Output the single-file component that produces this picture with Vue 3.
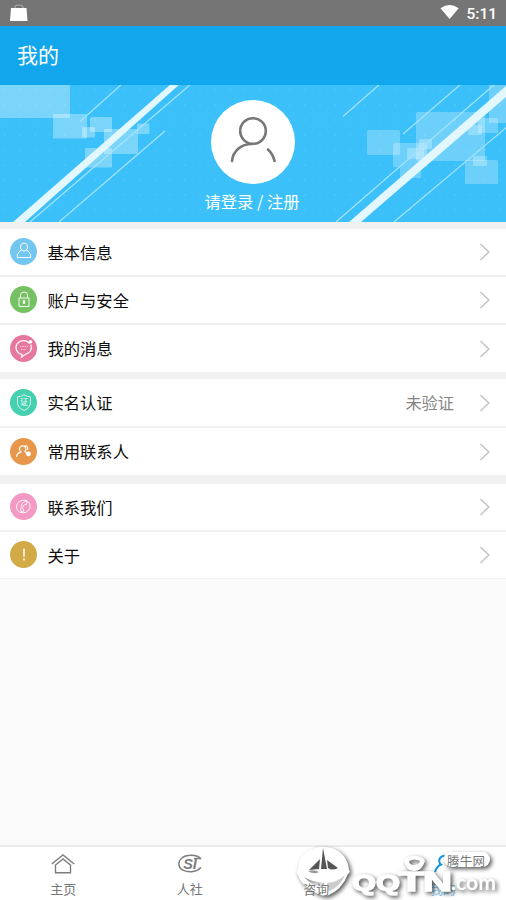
<script setup>
const groups = [
  [
    { icon: 'user', color: '#72c6ef', label: '基本信息' },
    { icon: 'lock', color: '#76c163', label: '账户与安全' },
    { icon: 'chat', color: '#e6779e', label: '我的消息' },
  ],
  [
    { icon: 'shield', color: '#45d0b0', label: '实名认证', value: '未验证' },
    { icon: 'contacts', color: '#e8964a', label: '常用联系人' },
  ],
  [
    { icon: 'phone', color: '#f29ac4', label: '联系我们' },
    { icon: 'about', color: '#d2ab46', label: '关于' },
  ],
]
</script>

<template>
  <div class="screen">
    <div class="status">
      <svg class="bag" width="20" height="18" viewBox="0 0 20 18">
        <path d="M6 5V3.500Q6 1 10 1T14 3.500V5" fill="none" stroke="#aaa" stroke-width="1.200" />
        <path d="M2 4H17.500L18.500 17H1Z" fill="#fff" />
      </svg>
      <div class="right">
        <svg width="20" height="16" viewBox="0 0 20 16"><path d="M.5 4.200Q9.500-2.200 18.700 4.200L9.600 15Z" fill="#fff" /></svg>
        <span>5:11</span>
      </div>
    </div>
    <header>我的</header>
    <section class="banner">
      <svg class="art" width="506" height="137" viewBox="0 0 506 137">
        <defs>
          <pattern id="dots" width="15" height="15" patternUnits="userSpaceOnUse"><circle cx="5" cy="5" r=".8" fill="#5ac9fb" /></pattern>
        </defs>
        <rect width="506" height="137" fill="url(#dots)" />
        <g fill="#fff" fill-opacity=".33">
          <rect x="-2" y="-2" width="72" height="35" rx="1" />
          <rect x="53" y="29" width="34" height="24.500" rx="1" />
          <rect x="90" y="32" width="22" height="15" rx="1" />
          <rect x="82" y="42" width="13" height="10.500" rx="1" />
          <rect x="104" y="44" width="34" height="25" rx="1" />
          <rect x="137" y="38.500" width="12.500" height="10.500" rx="1" />
          <rect x="85" y="63" width="27" height="19.500" rx="1" />
        </g>
        <g fill="#fff" fill-opacity=".26">
          <rect x="367" y="45" width="33" height="25" rx="1.500" />
          <rect x="393" y="58" width="34" height="24" rx="1.500" />
          <rect x="407" y="63" width="17" height="11" rx="1" />
          <rect x="419" y="54" width="13" height="10" rx="1" />
          <rect x="400" y="82" width="21" height="11" rx="1" />
          <rect x="416" y="27" width="69" height="49" rx="1.500" />
          <rect x="468" y="40" width="14" height="10" rx="1" />
          <rect x="478" y="33" width="20" height="15" rx="1" />
          <rect x="489" y="-2" width="20" height="40" rx="1" />
          <rect x="465" y="75" width="33" height="24" rx="1.500" />
          <rect x="473" y="71" width="14" height="10" rx="1" />
        </g>
        <g fill="#e2f7fe">
          <path d="M171-1H180L25 137H13Z" />
          <path d="M506 1V12L361 137H349Z" />
        </g>
        <g fill="none" stroke="#a5e4fc" stroke-width="1.200">
          <path d="M122-1L80 36.500M191-1L30 137M165 46L59 137" />
          <path d="M380-1L343 31.500M461-1L403 49M495-1L336 137M507 42L394 137" />
        </g>
      </svg>
      <div class="avatar">
        <svg width="84" height="84" viewBox="0 0 84 84" fill="none" stroke="#777" stroke-width="2.600" stroke-linecap="round">
          <circle cx="42" cy="31" r="12.800" />
          <path d="M21 61C22 51 30 44 41 44M57 49.500Q62 54 63.500 61" />
        </svg>
      </div>
      <div class="login">请登录 / 注册</div>
    </section>
    <main>
      <div v-for="(group, i) in groups" :key="i" class="group" :class="'group-' + i">
        <div v-for="item in group" :key="item.label" class="row">
          <svg class="icon" width="27" height="27" viewBox="0 0 27 27" fill="none" stroke="#fff" stroke-opacity=".9" stroke-width="1">
            <circle cx="13.500" cy="13.500" r="13.500" :fill="item.color" stroke="none" />
            <g v-if="item.icon === 'user'">
              <ellipse cx="14" cy="9" rx="3.600" ry="4" />
              <path d="M11.500 12C9 13.500 7 15.500 7.200 19.500H20.800C21 15.500 19 13.500 16.500 12" />
            </g>
            <g v-else-if="item.icon === 'lock'">
              <path d="M9 12H19V20.500H9ZM10.500 12V9Q10.500 6 14 6T17.500 9V12" />
              <path d="M14 14V18M12.700 15.500H15.300" stroke-width="1.800" />
            </g>
            <g v-else-if="item.icon === 'chat'">
              <path d="M19.800 8.500A7.600 7 0 1 0 12 19.400L11.500 22L15.500 19.300A7.600 7 0 0 0 20.700 9.500" stroke-width="1.300" />
              <circle cx="20.500" cy="6.700" r="1.800" fill="#fff" stroke="none" />
              <path d="M10 11.500H18M11 14.500H16" stroke-opacity=".55" stroke-dasharray="1.600 .6" />
            </g>
            <g v-else-if="item.icon === 'shield'">
              <path d="M14 5.500Q17 8 20.500 7.800V13Q20.500 19 14 21.500Q7.500 19 7.500 13V7.800Q11 8 14 5.500Z" stroke-opacity=".75" />
              <text x="14" y="16" class="seal">证</text>
            </g>
            <g v-else-if="item.icon === 'contacts'" stroke-width="1.300">
              <path d="M11.500 14A3.200 3.200 0 1 1 15 13.200L17.500 16.500M6.500 19C7 16 9 14.200 11.500 14M14.500 8Q18.500 7.500 17.500 12" />
              <circle cx="18.500" cy="16" r="2.400" fill="#fff" stroke="none" />
            </g>
            <g v-else-if="item.icon === 'phone'">
              <path d="M9.500 19C4.500 16 6 8.500 12.500 7.300C17.500 6.500 20.500 10 20 14C19.500 18.500 14.500 21 9.500 19" />
              <path d="M15.800 8.200C12 9.500 10.300 13 11 18.500L13.200 18.800L13.800 16.800L12.700 16C12.700 13.500 13.500 12 15 11.300L16.500 11.500L17.300 9Z" stroke-width=".9" />
            </g>
            <g v-else>
              <path d="M14 7.500V15.800M14 17.500V19.500" stroke-width="1.700" />
            </g>
          </svg>
          <span class="label">{{ item.label }}</span>
          <span v-if="item.value" class="value">{{ item.value }}</span>
          <svg class="chevron" width="12" height="20" viewBox="0 0 12 20"><path d="M1.500 2L9.800 10L1.500 18" fill="none" stroke="#c3c3c3" stroke-width="1.500" /></svg>
        </div>
      </div>
    </main>
    <nav>
      <div class="tab">
        <svg width="26" height="22" viewBox="0 0 26 22" fill="none" stroke="#7d7d7d" stroke-width="1.400">
          <path d="M1.800 11L13 2L24.200 11M5.500 19.800V12L13 6L20.500 12V19.800Z" />
        </svg>
        <span>主页</span>
      </div>
      <div class="tab">
        <svg width="26" height="22" viewBox="0 0 26 22">
          <path d="M24 6C20 1 9 1.500 5 5C0 9 1.500 15 6 17.200C12 20 20 19 24 14.500" fill="none" stroke="#7d7d7d" stroke-width="1.500" />
          <text x="13" y="15.500" class="si">SI</text>
          <path d="M17 5.500H24" stroke="#7d7d7d" stroke-width="1.400" />
        </svg>
        <span>人社</span>
      </div>
      <div class="tab front">
        <svg width="26" height="22" viewBox="0 0 26 22" />
        <span>咨询</span>
      </div>
      <div class="tab active">
        <svg width="26" height="22" viewBox="0 0 26 22" fill="none" stroke="#1296db" stroke-width="2">
          <path d="M14.500 2.500Q9 4 9.200 8Q9.500 10.500 11 11.500Q6.500 13.500 5 19" />
        </svg>
        <span>我的</span>
      </div>
    </nav>
    <svg class="mark" width="214" height="56" viewBox="0 0 214 56">
      <defs>
        <linearGradient id="bowl" x1="0" y1="0" x2="1" y2="1">
          <stop offset="0" stop-color="#777" />
          <stop offset="1" stop-color="#fff" />
        </linearGradient>
      </defs>
      <g class="raised" fill="#fff">
        <path d="M6 26C6 13 15 3 31 3S56 13 57 26Q59 28 56 30Q50 46 35 52Q26 52 15 43Q8 38 6 31Q3 28 6 26Z" />
        <path fill-rule="evenodd" d="M112 17Q114 27 122 27T133 17L131 14Q122 9 114 14ZM117 17Q122 14 128 17Q127 21 122 21T117 17Z" />
        <rect x="152" y="8" width="46" height="15" rx="7.500" />
        <g class="brand">
          <text x="60" y="46" textLength="24" lengthAdjust="spacingAndGlyphs" class="q">Q</text>
          <text x="84" y="46" textLength="24" lengthAdjust="spacingAndGlyphs" class="q">Q</text>
          <text x="107" y="47" textLength="25" lengthAdjust="spacingAndGlyphs">T</text>
          <text x="131" y="47" textLength="29" lengthAdjust="spacingAndGlyphs">N</text>
        </g>
        <text x="159" y="46" textLength="45" lengthAdjust="spacingAndGlyphs" class="com">.com</text>
      </g>
      <path d="M17 26L28 15L27 25ZM29 25L31 4L35 25ZM36 24L35 16L46 24Q40 27 36 24Z" fill="#555" />
      <path d="M16 27Q22 25 27 28Q22 31 16 27Z" fill="#999" />
      <path d="M12 33Q20 38 29 38L31 44Q20 42 12 33Z" fill="url(#bowl)" />
      <path d="M35 39Q46 38 53 31Q48 43 37 47Z" fill="#ccc" />
      <text x="155" y="22" class="site" textLength="38">腾牛网</text>
    </svg>
  </div>
</template>

<style>
body { margin: 0; }
</style>
<style scoped>
.screen {
  position: relative;
  display: flex;
  flex-direction: column;
  width: 506px;
  height: 900px;
  overflow: hidden;
  background: #fafafa;
  font-family: "Noto Sans CJK SC", sans-serif;
}
.status {
  height: 26px;
  flex: none;
  display: flex;
  justify-content: space-between;
  background: #757575;
  color: #fff;
  font: 500 15.500px/28px Roboto, sans-serif;
}
.bag { margin: 4px 0 0 9px; }
.right { display: flex; padding-right: 9px; gap: 6px; }
.right svg { margin-top: 4px; }
header {
  height: 59px;
  flex: none;
  box-sizing: border-box;
  padding-left: 17px;
  background: #12a7ed;
  color: #fff;
  font-size: 21px;
  line-height: 57px;
}
.banner {
  position: relative;
  height: 137px;
  flex: none;
  display: flex;
  flex-direction: column;
  align-items: center;
  background: #3bc0fa;
}
.art { position: absolute; left: 0; top: 0; }
.avatar {
  position: relative;
  width: 84px;
  height: 84px;
  margin-top: 15px;
  border-radius: 50%;
  background: #fff;
}
.avatar svg { display: block; }
.login {
  position: relative;
  margin-top: 5px;
  margin-left: -2px;
  color: #fff;
  font-size: 16.300px;
  line-height: 24px;
}
main { flex: 1; }
.group {
  display: grid;
  row-gap: 2px;
  background: #f1f1f1;
  border-top: 7px solid #f1f1f1;
}
.group-2 { border-top-width: 9px; border-bottom: 1px solid #f1f1f1; }
.row {
  display: flex;
  align-items: center;
  height: 46px;
  padding: 0 15px 0 10px;
  background: #fff;
}
.group-0 .row:last-child,
.group-1 .row { height: 47px; }
.icon { margin-bottom: 1px; }
.label { margin-left: 10.500px; padding-bottom: 1px; color: #0c0c0c; font-size: 16.300px; line-height: 24px; }
.value { margin-left: auto; margin-right: 25px; padding-bottom: 1px; color: #858585; font-size: 16.200px; }
.chevron { margin-left: auto; }
.value + .chevron { margin-left: 0; }
.seal { font-size: 8px; fill: #fff; stroke: none; text-anchor: middle; }
nav {
  height: 53px;
  flex: none;
  display: grid;
  grid-template-columns: repeat(4, 126.500px);
  border-top: 2px solid #ececec;
  background: #fff;
}
.tab {
  display: flex;
  flex-direction: column;
  align-items: center;
  padding-top: 6px;
  color: #777;
  font-size: 13px;
  line-height: 18px;
}
.tab span { margin-top: 5px; }
.front { position: relative; z-index: 2; }
.active { color: #8bcdf3; }
.si { font: italic bold 14.500px "Liberation Sans", sans-serif; fill: #7d7d7d; text-anchor: middle; }
.mark { position: absolute; left: 292px; top: 844px; z-index: 1; }
.raised { filter: drop-shadow(2px 2px 2px rgba(0, 0, 0, .65)); }
.brand { font: bold 27px "Liberation Sans", sans-serif; }
.brand text { stroke: #fff; stroke-width: 1.500px; }
.brand .q { font-size: 22px; }
.com { font: bold 21px Lato, sans-serif; }
.site { font-size: 12.500px; fill: #777; }
</style>
